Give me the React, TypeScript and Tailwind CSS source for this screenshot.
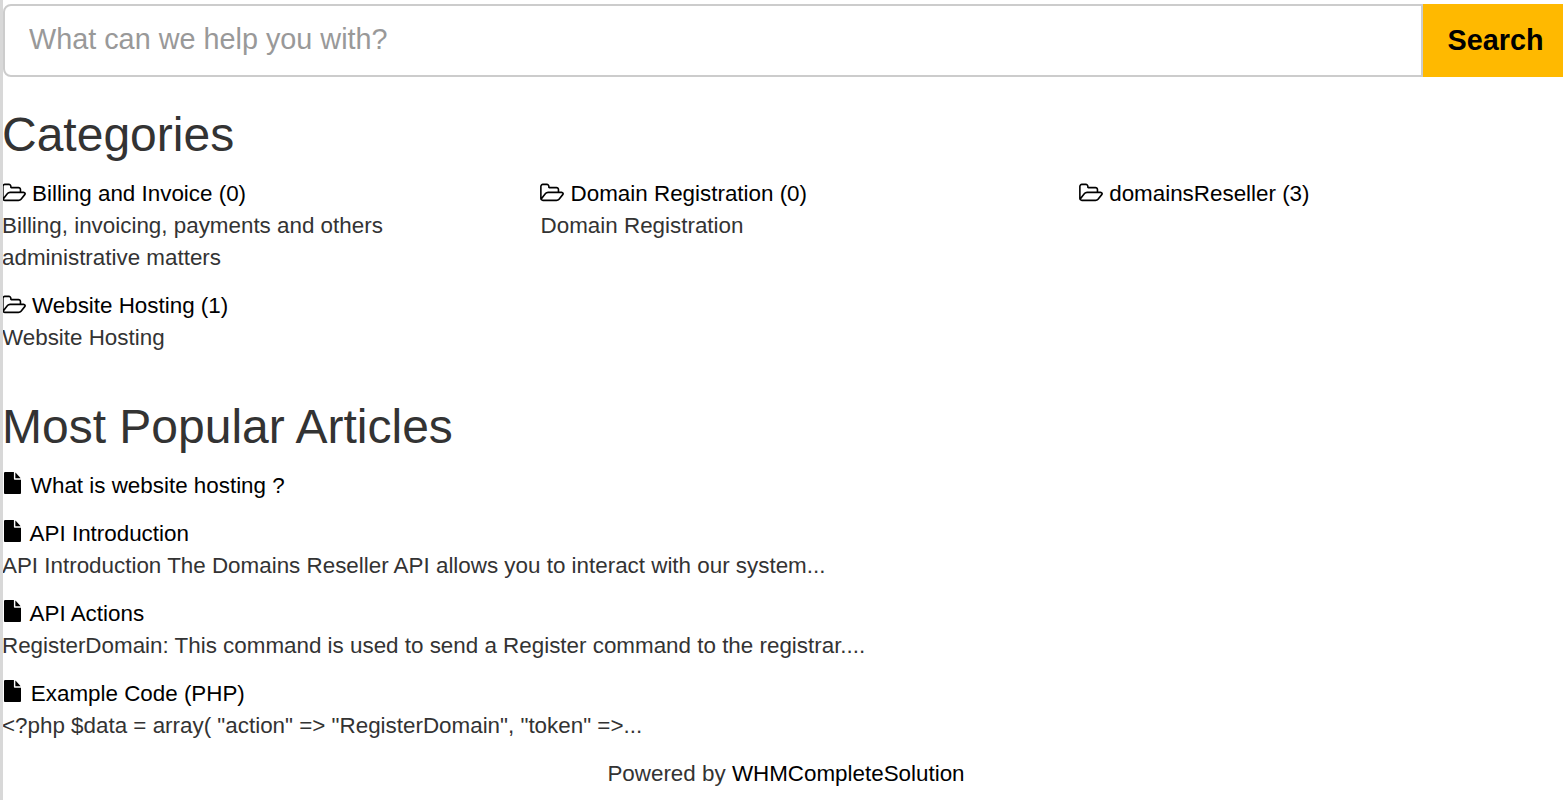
import React from 'react';

const categories = [
  { title: 'Billing and Invoice (0)', text: 'Billing, invoicing, payments and others administrative matters' },
  { title: 'Domain Registration (0)', text: 'Domain Registration' },
  { title: 'domainsReseller (3)', text: '' },
  { title: 'Website Hosting (1)', text: 'Website Hosting' },
];

const articles = [
  { title: 'What is website hosting ?', text: '', gap: 'mr-[9.8px]' },
  { title: 'API Introduction', text: 'API Introduction The Domains Reseller API allows you to interact with our system...', gap: 'mr-[8.6px]' },
  { title: 'API Actions', text: 'RegisterDomain: This command is used to send a Register command to the registrar....', gap: 'mr-[8.6px]' },
  { title: 'Example Code (PHP)', text: '<?php $data = array( "action" => "RegisterDomain", "token" =>...', gap: 'mr-[9.8px]' },
];

function FolderIcon() {
  return (
    <svg viewBox="0 0 1909 1792" className="-ml-[0.5px] mr-[6.5px] h-[22.4px] w-[24px] shrink-0 -translate-y-[1px]" fill="currentColor">
      <path d="M1781 931q0-35-53-35h-1088q-40 0-85.5 21.5t-71.5 52.5l-294 363q-18 24-18 40 0 35 53 35h1088q40 0 86-22t71-53l294-363q18-22 18-39zm-1141-163h768v-160q0-40-28-68t-68-28h-576q-40 0-68-28t-28-68v-64q0-40-28-68t-68-28h-320q-40 0-68 28t-28 68v853l256-315q44-53 116-87.5t140-34.5zm1269 163q0 62-46 120l-295 363q-43 53-116 87.5t-140 34.5h-1088q-92 0-158-66t-66-158v-960q0-92 66-158t158-66h320q92 0 158 66t66 158v32h544q92 0 158 66t66 158v160h192q54 0 99 24.5t67 70.5q15 32 15 68z" />
    </svg>
  );
}

function FileIcon({ gap }: { gap: string }) {
  return (
    <svg viewBox="0 0 1536 1792" preserveAspectRatio="none" className={`${gap} ml-[2px] h-[22px] w-[17px] shrink-0 -translate-y-[3px]`} fill="currentColor">
      <path d="M1024 512v-472q22 14 36 28l408 408q14 14 28 36h-472zm-128 32q0 40 28 68t68 28h544v1056q0 40-28 68t-68 28h-1344q-40 0-68-28t-28-68v-1600q0-40 28-68t68-28h800v544z" />
    </svg>
  );
}

export default function App() {
  return (
    <div className="h-[800px] overflow-hidden border-l-[3px] border-[#d8d8d8] bg-white pt-[4px] text-[22.4px] leading-[32px] text-[#333] font-['Liberation_Sans',Arial,sans-serif]">
      {/* search bar */}
      <div className="flex h-[73px]">
        <input
          placeholder="What can we help you with?"
          className="h-[73px] flex-1 min-w-0 rounded-l-[8px] border-2 border-[#ccc] bg-white pl-[24px] pr-[25px] pb-[2px] text-[28.8px] text-[#333] outline-none placeholder:text-[#999]"
        />
        <button className="h-[73px] w-[140px] bg-[#ffb900] pb-[2px] pl-[5px] text-[28.8px] font-bold text-black">Search</button>
      </div>

      <div className="-ml-[1px]">
        <h2 className="mt-[31px] text-[48px] leading-[53px] font-normal">Categories</h2>
        <div className="mt-[17px] grid grid-cols-[538.6px_538.6px_1fr]">
          {categories.map((c) => (
            <div key={c.title} className="mb-[16px]">
              <div className="flex items-center text-black">
                <FolderIcon />
                {c.title}
              </div>
              {c.text && <p className="w-[440px]">{c.text}</p>}
            </div>
          ))}
        </div>

        <h2 className="mt-[30px] text-[48px] leading-[53px] font-normal">Most Popular Articles</h2>
        <div className="mt-[17px]">
          {articles.map((a) => (
            <div key={a.title} className="mb-[16px]">
              <div className="flex items-center text-black">
                <FileIcon gap={a.gap} />
                {a.title}
              </div>
              {a.text && <p>{a.text}</p>}
            </div>
          ))}
        </div>

        <p className="pl-[7px] text-center">
          Powered by <span className="text-black">WHMCompleteSolution</span>
        </p>
      </div>
    </div>
  );
}
